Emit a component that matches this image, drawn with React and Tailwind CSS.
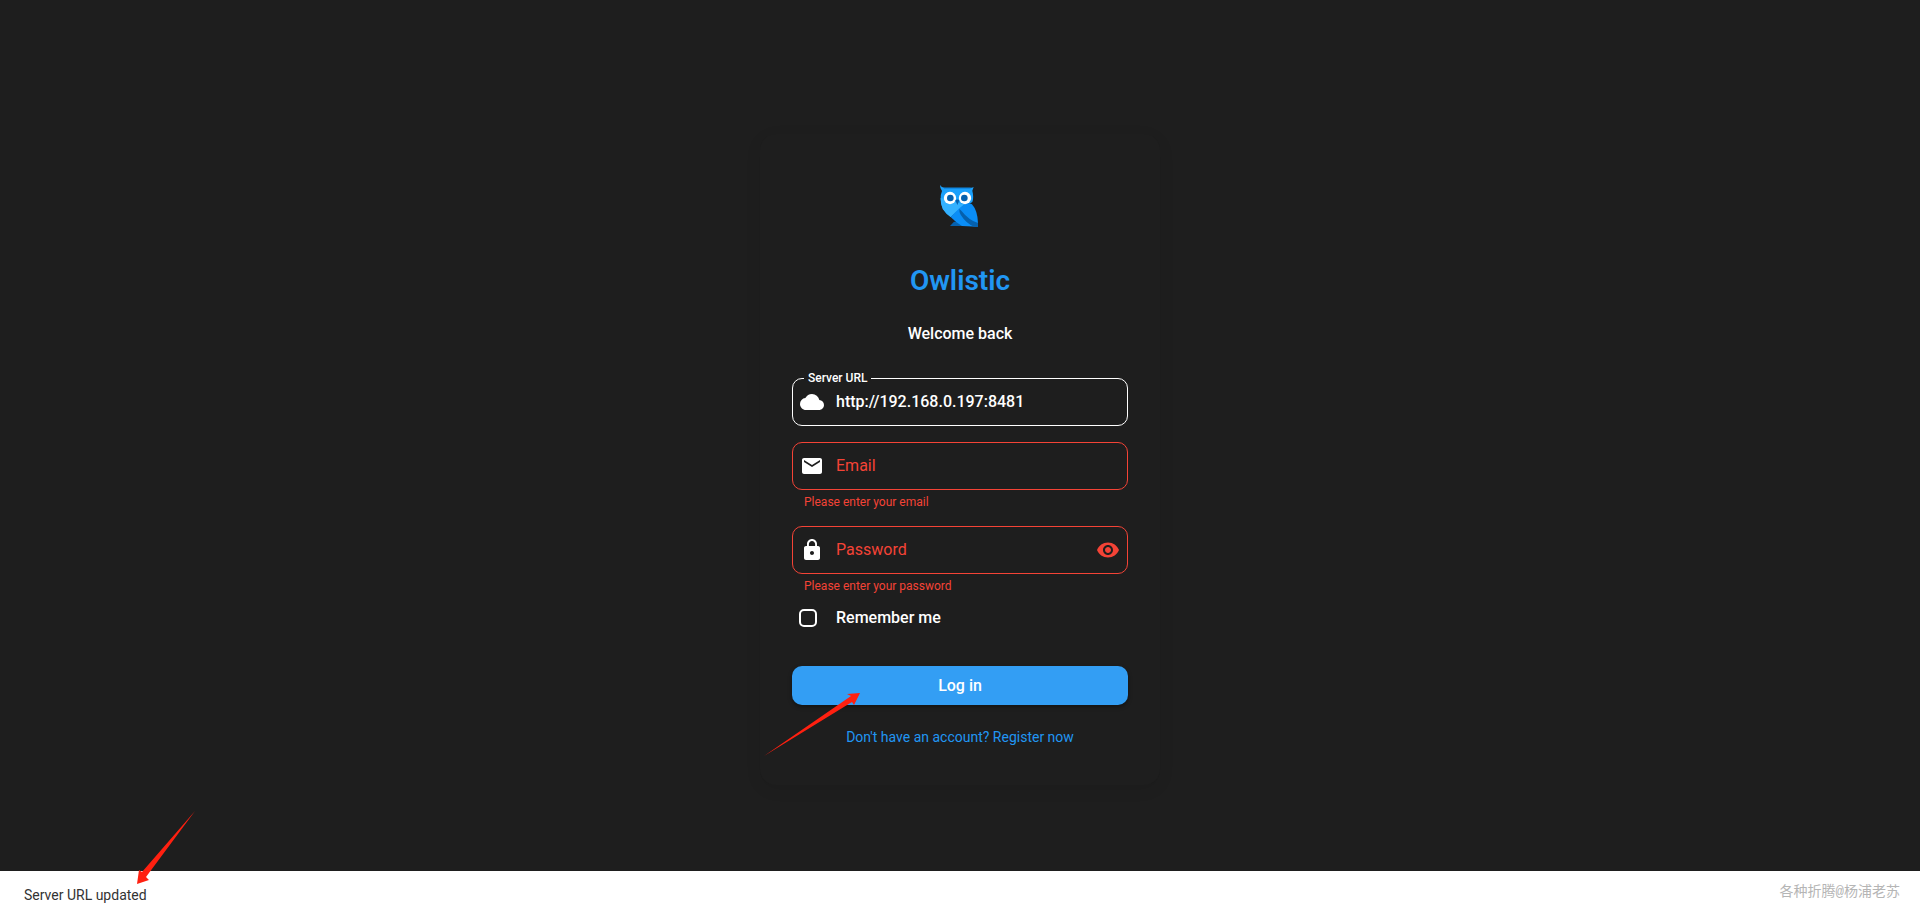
import { MdCloud, MdEmail, MdLock, MdVisibility } from "react-icons/md";

function OwlLogo() {
  return (
    <svg viewBox="60 45 120 126" className="h-[42px] w-10" role="img" aria-label="Owlistic">
      <path d="M90 168 L102 155 L140 160 L150 168 Z" fill="#0560ad" />
      <path d="M60 45 Q64 53 74 53 H150 Q157 54 161 51 L157 62 Q162 82 157 96 Q150 103 137 102 L92 141 Q63 122 62 88 Q61 74 66 63 Q60 56 60 45 Z" fill="#1ba0fb" />
      <path d="M62 84 Q61 100 68 117 Q78 132 92 141 L132 103 L112 98 Z" fill="#33b1ff" />
      <path d="M92 141 L118 115 L136 101 Q147 98 156 103 Q173 122 174 160 V170 L126 168 Q108 158 92 141 Z" fill="#0a8df6" />
      <path d="M118 116 Q122 120 124 122 Q146 150 174 159 V171 H164 Q138 160 122 134 Q117 125 118 116 Z" fill="#0560ad" />
      <path d="M72 53 H152 V56 H72 Z" fill="#0b7fd8" />
      <circle cx="90" cy="84" r="18.5" fill="#fff" />
      <circle cx="135" cy="84" r="18.5" fill="#fff" />
      <circle cx="91" cy="84" r="10" fill="#0560ad" />
      <circle cx="133" cy="84" r="10" fill="#0560ad" />
      <path d="M106 91 Q112 86 118 91 L112 105 Z" fill="#0560ad" />
    </svg>
  );
}

function ErrorText({ id, children }) {
  return (
    <p id={id} className="px-3 pt-1 text-xs leading-4 text-[#f44336]">
      {children}
    </p>
  );
}

const fieldBox = "flex h-12 items-center gap-3 rounded-[10px] border px-[7px]";

export default function App() {
  return (
    <div className="relative flex min-h-screen flex-col items-center justify-center bg-[#1e1e1e] font-['Roboto','Liberation_Sans',sans-serif] text-white">
      <main className="relative w-full max-w-[400px] rounded-2xl bg-[#1e1e1e] p-8 shadow-[0_4px_16px_rgba(0,0,0,0.08)]">
        <div className="flex h-20 items-center justify-center">
          <OwlLogo />
        </div>
        <h1 className="mt-4 text-center text-[28px] leading-[38px] font-semibold text-[#2196f3]">Owlistic</h1>
        <p className="mt-[22px] text-center text-base font-medium">Welcome back</p>

        <form className="mt-8" noValidate onSubmit={(e) => e.preventDefault()}>
          <div className={`relative border-white ${fieldBox}`}>
            <label htmlFor="server" className="absolute -top-[9px] left-[11px] bg-[#1e1e1e] px-1 text-xs leading-4 font-medium">
              Server URL
            </label>
            <MdCloud className="size-6 shrink-0" />
            <input
              id="server"
              type="url"
              defaultValue="http://192.168.0.197:8481"
              className="min-w-0 flex-1 bg-transparent text-base font-medium outline-none"
            />
          </div>

          <div className={`mt-4 border-[#f44336] ${fieldBox}`}>
            <MdEmail className="size-6 shrink-0" />
            <label htmlFor="email" className="text-base text-[#f44336]">Email</label>
            <input id="email" type="email" aria-describedby="email-error" className="min-w-0 flex-1 bg-transparent outline-none" />
          </div>
          <ErrorText id="email-error">Please enter your email</ErrorText>

          <div className={`mt-4 border-[#f44336] ${fieldBox}`}>
            <MdLock className="size-6 shrink-0" />
            <label htmlFor="password" className="text-base text-[#f44336]">Password</label>
            <input id="password" type="password" aria-describedby="password-error" className="min-w-0 flex-1 bg-transparent outline-none" />
            <button type="button" aria-label="Show password" className="text-[#f44336]">
              <MdVisibility className="size-6" />
            </button>
          </div>
          <ErrorText id="password-error">Please enter your password</ErrorText>

          <label className="mt-3 flex h-6 items-center gap-[19px] px-[7px] text-base font-medium">
            <input type="checkbox" className="size-[18px] appearance-none rounded-[5px] border-2 border-white checked:bg-[#2196f3]" />
            Remember me
          </label>

          <button
            type="submit"
            className="mt-9 flex h-[39px] w-full items-center justify-center rounded-[10px] bg-[#339ef4] text-base font-medium shadow-[0_2px_4px_rgba(0,0,0,0.4)]"
          >
            Log in
          </button>
        </form>

        <a href="#register" className="mt-4 flex h-8 items-center justify-center text-sm text-[#2196f3]">
          Don't have an account? Register now
        </a>

        <svg viewBox="0 0 96 63" className="pointer-events-none absolute bottom-[29px] left-1 h-[63px] w-24" aria-hidden="true">
          <path d="M0 63 L87 3 L83 1 L96 0 L90 12 L88 9 Z" fill="#ff2010" />
        </svg>
      </main>

      <footer className="absolute inset-x-0 bottom-0 flex h-12 items-center bg-white px-6 text-sm text-[#333]">
        <span role="status">Server URL updated</span>
        <span className="absolute top-[11px] right-5 font-['Liberation_Mono','Noto_Sans_CJK_SC',monospace] leading-5 text-[#b5b5b5]">
          各种折腾@杨浦老苏
        </span>
        <svg viewBox="0 0 58 73" className="pointer-events-none absolute bottom-[35px] left-[137px] h-[73px] w-[58px]" aria-hidden="true">
          <path d="M58 0 L9 66 L12 69 L0 73 L2 59 L5 61 Z" fill="#ff2010" />
        </svg>
      </footer>
    </div>
  );
}
